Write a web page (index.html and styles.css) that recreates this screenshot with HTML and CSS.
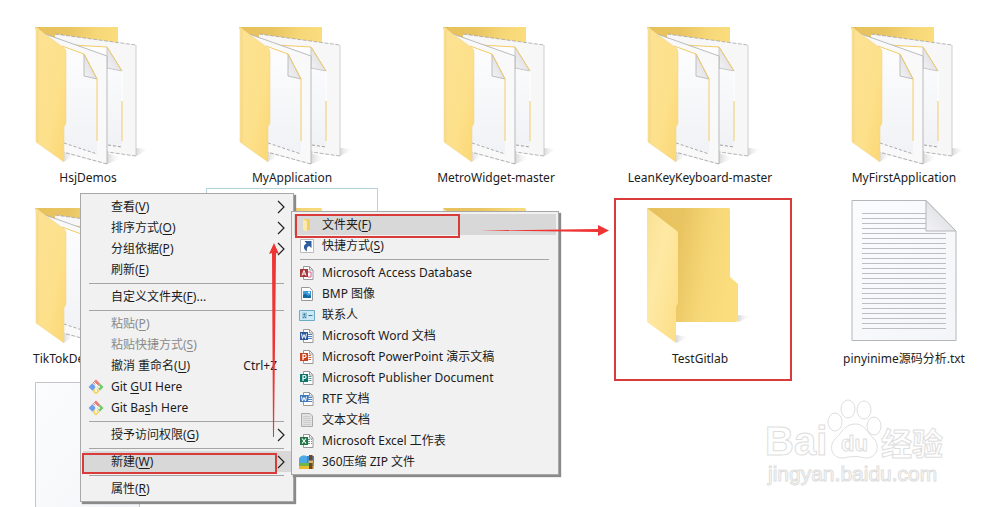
FILE: index.html
```
<!DOCTYPE html>
<html lang="zh-CN">
<head>
<meta charset="utf-8">
<title>文件夹</title>
<link rel="stylesheet" href="styles.css">
</head>
<body>
<svg class="defs" aria-hidden="true">
  <defs>
    <linearGradient id="cover" x1="0" y1="0" x2="1" y2="1"><stop offset="0" stop-color="#fce294"/><stop offset=".6" stop-color="#fde08a"/><stop offset="1" stop-color="#fbd775"/></linearGradient>
    <linearGradient id="pale" x1="0" y1="0" x2="1" y2="1"><stop offset="0" stop-color="#fae093"/><stop offset=".4" stop-color="#fee9a4"/><stop offset="1" stop-color="#fcdd85"/></linearGradient>
    <linearGradient id="back" x1="0" y1="0" x2="1" y2="0.2"><stop offset="0" stop-color="#e6c05a"/><stop offset="0.4" stop-color="#e9c562"/><stop offset="0.75" stop-color="#f7d878"/><stop offset="1" stop-color="#fcdd7d"/></linearGradient>
    <linearGradient id="paper" x1="0" y1="0" x2="1" y2="1"><stop offset="0" stop-color="#fbfcfd"/><stop offset="1" stop-color="#f3f5f8"/></linearGradient>
    <linearGradient id="inner" x1="0" y1="0" x2="0" y2="1"><stop offset="0" stop-color="#fdfdfe"/><stop offset="1" stop-color="#f0f2f5"/></linearGradient>
    <linearGradient id="curl" x1="0" y1="1" x2="1" y2="0"><stop offset="0" stop-color="#f4f4f6"/><stop offset="1" stop-color="#d4d5d9"/></linearGradient>
    <linearGradient id="shade" x1="0" y1="0" x2="1" y2="0"><stop offset="0" stop-color="#d8d8d8"/><stop offset="1" stop-color="#fff" stop-opacity="0"/></linearGradient>
    <symbol id="full" viewBox="0 0 120 144">
      <path d="M35 140 48 133 35 130z" fill="url(#shade)"/><path d="M79 142 95 136 79 131z" fill="url(#shade)"/><path d="M108 134 122 127 108 126z" fill="url(#shade)"/>
      <path d="M7 5H90V60H30z" fill="url(#back)"/>
      <path d="M27 12 108 23V134L79 130 27 120z" fill="#f7f7f8"/>
      <path d="M27 12 108 23M108 134 79 130" fill="none" stroke="#a5a5a8" stroke-width=".8" stroke-dasharray="4 1.500"/>
      <path d="M108 23V134" stroke="#c4c4c8" stroke-width=".8"/>
      <path d="M36 25 79 25 94 49V125L60 120z" fill="url(#inner)"/>
      <path d="M79 25 94 49 79 46z" fill="url(#curl)" stroke="#b5b5b8" stroke-width=".7"/>
      <path d="M44 23 79 25 94 49M94 79V119" fill="none" stroke="#f3cd68" stroke-width="1"/>
      <path d="M94 49V79" stroke="#fff"/>
      <path d="M80 123 94 125" stroke="#777" stroke-width=".7" stroke-dasharray="3 2"/>
      <path d="M17 12 79 34V142L35 130z" fill="#f9f9fa"/>
      <path d="M17 12 79 34V142" fill="none" stroke="#aaabae" stroke-width=".8"/>
      <path d="M79 142 35 130" stroke="#999a9e" stroke-width=".8" stroke-dasharray="4 1.500"/>
      <path d="M34 24 56 32 69 57V132L35 120z" fill="url(#inner)"/>
      <path d="M56 32 69 57 56 54z" fill="url(#curl)" stroke="#b0b0b4" stroke-width=".8"/>
      <path d="M34 24 56 32 69 57V119" fill="none" stroke="#f4cc66"/>
      <path d="M36 121 69 132" stroke="#888" stroke-width=".7" stroke-dasharray="3 2"/>
      <path d="M8 5 17 12 36 26Q38 27 38 30V101L36 105V140L8 120z" fill="url(#cover)" stroke="#ecd08a" stroke-width=".5"/>
      <path d="M10 8V120" stroke="#efd084" stroke-width=".6"/>
    </symbol>
    <symbol id="empty" viewBox="0 0 120 144">
      <path d="M36 140 50 134 36 132z" fill="url(#shade)"/><path d="M98 119 112 113 98 112z" fill="url(#shade)"/>
      <path d="M7 5H89Q90 5 90 7V74L98 81V117Q98 119 96 119H34z" fill="url(#back)"/>
      <path d="M7 5 37 28Q38 29 38 31V100L36 104V140L7 119z" fill="url(#pale)"/>
    </symbol>
    <symbol id="sheet" viewBox="0 0 120 144" overflow="visible">
      <path d="M7.500-1.500H82L111.500 29V138.500H7.500z" fill="url(#paper)" stroke="#c3c5c8"/>
    </symbol>
    <symbol id="text" viewBox="0 0 120 144" overflow="visible">
      <path d="M8-2.500H82L112 28V137.500H8z" fill="url(#paper)" stroke="#b4b6b9"/>
      <path d="M18 10.500H82M18 15.500H82M18 20.500H82M18 25.500H82M18 30.500H102M18 35.500H102M18 40.500H102M18 45.500H102M18 50.500H102M18 55.500H102M18 60.500H102M18 65.500H102M18 70.500H102M18 75.500H102M18 80.500H102M18 85.500H102M18 90.500H102M18 95.500H102M18 100.500H102M18 105.500H102M18 110.500H102M18 115.500H102M18 120.500H102M18 125.500H102" stroke="#bcbec1"/>
      <path d="M82-2.500 112 28H82z" fill="url(#curl)" stroke="#b4b6b9"/>
    </symbol>
    <symbol id="git" viewBox="0 0 16 16">
      <path d="M8 .5 12 4.500 9.500 7 4.500 3.800z" fill="#e87f7b"/>
      <path d="M4.200 4.300 8 8 4.500 11.700.6 8z" fill="#6f9fe8"/>
      <path d="M12 4.500 15.500 8 11.800 11.700 9.300 8z" fill="#79c66a"/>
      <path d="M8 9 11.500 12 8 15.500 4.500 12z" fill="#f3d35e"/>
      <path d="M5.500 2.500 10.500 7.500M8 5V12" stroke="#fff" stroke-width="1"/><circle cx="8" cy="12" r="1" fill="#fff"/><circle cx="11" cy="8" r="1" fill="#fff"/>
    </symbol>
    <symbol id="page" viewBox="0 0 16 16">
      <path d="M4.500 1.500H10.500L14 5V14.500H4.500z" fill="#fff" stroke="#999"/><path d="M10.500 1.500V5H14" fill="none" stroke="#999"/>
    </symbol>
    <symbol id="chev" viewBox="0 0 8 14"><path d="M1 1 7 7 1 13" fill="none" stroke="#222" stroke-width="1.200"/></symbol>
  </defs>
</svg>
<main class="desktop">
  <div class="files">
    <div class="file"><svg class="pic"><use href="#full"/></svg><span>HsjDemos</span></div>
    <div class="file"><svg class="pic"><use href="#full"/></svg><span>MyApplication</span></div>
    <div class="file"><svg class="pic"><use href="#full"/></svg><span>MetroWidget-master</span></div>
    <div class="file"><svg class="pic"><use href="#full"/></svg><span>LeanKeyKeyboard-master</span></div>
    <div class="file"><svg class="pic"><use href="#full"/></svg><span>MyFirstApplication</span></div>
    <div class="file"><svg class="pic"><use href="#full"/></svg><span class="long">TikTokDe</span></div>
    <div class="file selected"><svg class="pic"><use href="#empty"/></svg></div>
    <div class="file"><svg class="pic"><use href="#empty"/></svg></div>
    <div class="file"><svg class="pic"><use href="#empty"/></svg><span>TestGitlab</span></div>
    <div class="file"><svg class="pic"><use href="#text"/></svg><span>pinyinime源码分析.txt</span></div>
    <div class="file"><svg class="pic"><use href="#sheet"/></svg></div>
  </div>

  <div class="menu main-menu" role="menu">
    <button class="item"><i></i>查看(<u>V</u>)<svg class="chev"><use href="#chev"/></svg></button>
    <button class="item"><i></i>排序方式(<u>O</u>)<svg class="chev"><use href="#chev"/></svg></button>
    <button class="item"><i></i>分组依据(<u>P</u>)<svg class="chev"><use href="#chev"/></svg></button>
    <button class="item"><i></i>刷新(<u>E</u>)</button>
    <hr>
    <button class="item"><i></i>自定义文件夹(<u>F</u>)...</button>
    <hr>
    <button class="item" disabled><i></i>粘贴(<u>P</u>)</button>
    <button class="item" disabled><i></i>粘贴快捷方式(<u>S</u>)</button>
    <button class="item"><i></i>撤消 重命名(<u>U</u>)<kbd>Ctrl+Z</kbd></button>
    <button class="item"><i><svg class="ico"><use href="#git"/></svg></i>Git&nbsp;<u>G</u>UI Here</button>
    <button class="item"><i><svg class="ico"><use href="#git"/></svg></i>Git Ba<u>s</u>h Here</button>
    <hr>
    <button class="item"><i></i>授予访问权限(<u>G</u>)<svg class="chev"><use href="#chev"/></svg></button>
    <hr>
    <button class="item active"><i></i>新建(<u>W</u>)<svg class="chev"><use href="#chev"/></svg></button>
    <hr>
    <button class="item"><i></i>属性(<u>R</u>)</button>
  </div>

  <div class="menu sub-menu" role="menu">
    <button class="item active"><i><svg class="ico" viewBox="0 0 16 16"><path d="M4 2H11V13H6z" fill="#f1cd6b"/><path d="M4 2 8 4V14.500L4 13z" fill="#fde9a8"/></svg></i>文件夹(<u>F</u>)</button>
    <button class="item"><i><svg class="ico" viewBox="0 0 16 16"><path d="M1.500 1.500H14.500V14.500H1.500z" fill="#fff" stroke="#bbb"/><path d="M5.500 3H12.500V10L10 8C8 9 7.500 10.500 8 13.500 4 11 4 7 7.500 5.500z" fill="#2f5f9e"/></svg></i>快捷方式(<u>S</u>)</button>
    <hr>
    <button class="item"><i><svg class="ico" viewBox="0 0 16 16"><use href="#page"/><path d="M9 7H12V12H9" fill="none" stroke="#d58"/><path d="M1 4H9V12H1z" fill="#a4373a"/><path d="M3 10.500 5 5.500 7 10.500M4 9H6" fill="none" stroke="#fff"/></svg></i>Microsoft Access Database</button>
    <button class="item"><i><svg class="ico" viewBox="0 0 16 16"><path d="M2.500 1.500H10.500L13.500 4.500V14.500H2.500z" fill="#fff" stroke="#999"/><path d="M4 5H12V12H4z" fill="#3a9ee0"/><path d="M4 12V9L6.500 7.500 9 10 10.500 9 12 10V12z" fill="#17699e"/><circle cx="10" cy="6.500" r="1" fill="#fff"/></svg></i>BMP 图像</button>
    <button class="item"><i><svg class="ico" viewBox="0 0 16 16"><path d="M.5 3.500H15.500V13.500H.5z" fill="#cae8f5" stroke="#6daac6"/><path d="M3 5.500H8V11.500H3z" fill="#9bc9dd"/><circle cx="5.500" cy="7.500" r="1" fill="#447891"/><path d="M4 11Q5.500 8 7 11M9.500 8.500H13.500" fill="none" stroke="#447891"/></svg></i>联系人</button>
    <button class="item"><i><svg class="ico" viewBox="0 0 16 16"><use href="#page"/><path d="M9 6.500H13M9 8.500H13M9 10.500H13" stroke="#4a85c8"/><path d="M1 4H9V12H1z" fill="#2b579a"/><path d="M2.500 5.500 3.500 10.500 5 6.500 6.500 10.500 7.500 5.500" fill="none" stroke="#fff"/></svg></i>Microsoft Word 文档</button>
    <button class="item"><i><svg class="ico" viewBox="0 0 16 16"><use href="#page"/><path d="M9.500 6.500H12M9.500 8.500H12.500M9.500 10.500H12" stroke="#d8613e"/><path d="M1 4H9V12H1z" fill="#c9431f"/><path d="M4 11V5.500H5.500Q7 5.500 7 7T5.500 8.500H4" fill="none" stroke="#fff" stroke-width="1.200"/></svg></i>Microsoft PowerPoint 演示文稿</button>
    <button class="item"><i><svg class="ico" viewBox="0 0 16 16"><use href="#page"/><path d="M9.500 6.500H12.500M9.500 8.500H12.500M9.500 10.500H12.500" stroke="#46a097"/><path d="M1 4H9V12H1z" fill="#077568"/><path d="M4 11V5.500H5.500Q7 5.500 7 7T5.500 8.500H4" fill="none" stroke="#fff" stroke-width="1.200"/></svg></i>Microsoft Publisher Document</button>
    <button class="item"><i><svg class="ico" viewBox="0 0 16 16"><use href="#page"/><path d="M9 6.500H13M9 8.500H13M9 10.500H13" stroke="#4a85c8"/><path d="M1 4H10L9 11H1z" fill="#3f78bd"/><path d="M2.500 5.500 3.500 10 5 6.500 6.500 10 7.500 5.500" fill="none" stroke="#fff"/></svg></i>RTF 文档</button>
    <button class="item"><i><svg class="ico" viewBox="0 0 16 16"><path d="M2.500 1.500H11L13.500 4V14.500H2.500z" fill="#e2e2e2" stroke="#aaa"/><path d="M4 4.500H11M4 6.500H12M4 8.500H12M4 10.500H12M4 12.500H12" stroke="#ccc"/></svg></i>文本文档</button>
    <button class="item"><i><svg class="ico" viewBox="0 0 16 16"><use href="#page"/><path d="M9 6.500H13M9 8.500H13M9 10.500H13" stroke="#58a878" stroke-dasharray="2 1"/><path d="M1 4H9V12H1z" fill="#217346"/><path d="M3 5.500 7 10.500M7 5.500 3 10.500" stroke="#fff" stroke-width="1.200"/></svg></i>Microsoft Excel 工作表</button>
    <button class="item"><i><svg class="ico" viewBox="0 0 16 16"><path d="M0 4Q4-1 9 3V10H0z" fill="#4ca9e4"/><path d="M8 2H15V10H8z" fill="#358bd0"/><path d="M0 9H15V12H0z" fill="#6fb548"/><path d="M0 12H15V15H0z" fill="#e9b92f"/><path d="M10 1H13.500V15H10z" fill="#744327"/><path d="M9.500 6.500H14V9H9.500z" fill="#d9b36a"/></svg></i>360压缩 ZIP 文件</button>
  </div>

  <svg class="marks" viewBox="0 0 1000 507" aria-hidden="true">
    <g fill="none" stroke="#d93a3a" stroke-width="2">
      <path d="M296 215H459V237H296zM83 454H276V473H83zM615 199H791V380H615z"/>
    </g>
    <path d="M480 230.500 598 229V225L609 230.500 598 236V232z" fill="#ee3535"/>
    <path d="M274 243 279 254 276 253 274 437H273L272 253 269 254z" fill="#ee3535"/>
  </svg>

  <svg class="brand" viewBox="0 0 200 92" role="img" aria-label="Baidu 经验">
    <g fill="#fff" stroke="#dedede" stroke-width="1">
      <text class="logo" x="5" y="57">Bai</text>
      <ellipse cx="75" cy="24" rx="7" ry="9"/><ellipse cx="88" cy="11" rx="7" ry="9"/><ellipse cx="104" cy="12" rx="7" ry="9"/><ellipse cx="114" cy="28" rx="7" ry="9"/>
      <path d="M94 26C104 25 108 35 114 41 121 49 116 61 105 60 98 58 91 58 84 60 72 61 68 49 75 41 82 35 84 27 94 26z"/>
      <text class="du" x="81" y="53">du</text>
      <text class="cn" x="121" y="57">经验</text>
      <text class="site" x="8" y="83">jingyan.baidu.com</text>
    </g>
  </svg>
</main>
</body>
</html>
```
FILE: styles.css
```
* { box-sizing: border-box; }
body {
  margin: 0;
  background: #fff;
  color: #1c1c1c;
  font: 12px/20px "Noto Sans", "Noto Sans CJK SC", sans-serif;
}
.defs { position: absolute; width: 0; height: 0; }
.desktop { position: relative; height: 100vh; overflow: hidden; }
.files {
  display: grid;
  grid-template-columns: repeat(5, 1fr);
  grid-auto-rows: 181px;
  margin: 0 -6px 0 -14px;
  padding-top: 22px;
}
.file { display: flex; flex-direction: column; align-items: center; gap: 2px; white-space: nowrap; }
.pic { width: 120px; height: 144px; overflow: visible; flex: none; }
.long { align-self: flex-start; padding-left: 47px; }
.selected { position: relative; }
.selected::before {
  content: "";
  position: absolute;
  inset: -15px 16px 0;
  border: 1px solid #b5d3dc;
}
.menu {
  position: absolute;
  display: flex;
  flex-direction: column;
  padding: 2px;
  background: #f1f1f1;
  border: 1px solid #a8a8a8;
  box-shadow: 2px 2px 1px #8a8a8a;
}
.main-menu { left: 80px; top: 193px; width: 214px; }
.sub-menu { left: 291px; top: 211px; width: 268px; }
.item {
  display: flex;
  align-items: center;
  height: 21px;
  padding: 0 6px 0 5px;
  border: 0;
  background: none;
  color: inherit;
  font: inherit;
  white-space: nowrap;
}
.item:disabled { color: #8a8a8a; }
.item.active { background: #d8d8d8; }
.item i { display: flex; width: 18px; margin-right: 5px; flex: none; }
.item u { text-underline-offset: 2px; }
.ico { width: 16px; height: 16px; }
.chev { width: 8px; height: 14px; margin-left: auto; }
.item kbd { margin: 0 8px 0 auto; font: inherit; }
hr {
  width: auto;
  height: 6px;
  margin: 0 7px 0 6px;
  border: 0;
  background: linear-gradient(#a5a5a5, #a5a5a5) center / 100% 1px no-repeat;
}
.marks { position: absolute; left: 0; top: 0; width: 1000px; height: 507px; pointer-events: none; }
.brand { position: absolute; left: 760px; top: 398px; width: 200px; height: 92px; }
.logo { font: bold 40px "Liberation Sans", sans-serif; }
.du { font: bold 22px "Liberation Sans", sans-serif; }
.cn { font: bold 31px "Noto Sans CJK SC", sans-serif; }
.site { font: 21px "Liberation Sans", sans-serif; }
```
